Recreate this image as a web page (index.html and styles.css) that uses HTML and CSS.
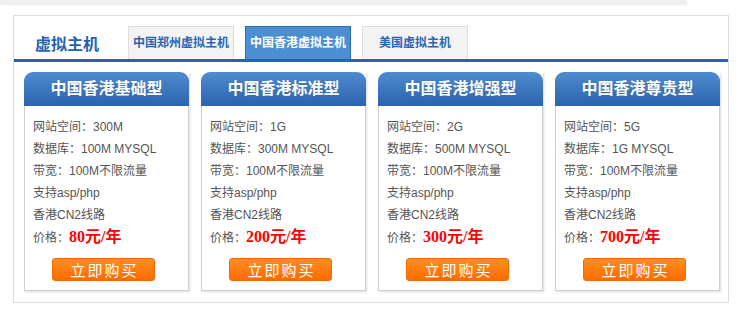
FILE: index.html
```html
<!DOCTYPE html>
<html lang="zh-CN">
<head>
  <meta charset="UTF-8" />
  <title>虚拟主机</title>
  <link rel="stylesheet" href="styles.css">
</head>
<body>
  <div class="topbar"></div>

  <div class="panel">
    <div class="panel-head">
      <h2 class="title">虚拟主机</h2>
      <ul class="tabs">
        <li class="tab">中国郑州虚拟主机</li>
        <li class="tab active">中国香港虚拟主机</li>
        <li class="tab">美国虚拟主机</li>
      </ul>
    </div>

    <div class="plans">
      <div class="plan">
        <div class="plan-name">中国香港基础型</div>
        <div class="plan-body">
          <p>网站空间：300M</p>
          <p>数据库：100M MYSQL</p>
          <p>带宽：100M不限流量</p>
          <p>支持asp/php</p>
          <p>香港CN2线路</p>
          <p>价格：<span class="price">80元/年</span></p>
          <a class="buy" href="#">立即购买</a>
        </div>
      </div>

      <div class="plan">
        <div class="plan-name">中国香港标准型</div>
        <div class="plan-body">
          <p>网站空间：1G</p>
          <p>数据库：300M MYSQL</p>
          <p>带宽：100M不限流量</p>
          <p>支持asp/php</p>
          <p>香港CN2线路</p>
          <p>价格：<span class="price">200元/年</span></p>
          <a class="buy" href="#">立即购买</a>
        </div>
      </div>

      <div class="plan">
        <div class="plan-name">中国香港增强型</div>
        <div class="plan-body">
          <p>网站空间：2G</p>
          <p>数据库：500M MYSQL</p>
          <p>带宽：100M不限流量</p>
          <p>支持asp/php</p>
          <p>香港CN2线路</p>
          <p>价格：<span class="price">300元/年</span></p>
          <a class="buy" href="#">立即购买</a>
        </div>
      </div>

      <div class="plan">
        <div class="plan-name">中国香港尊贵型</div>
        <div class="plan-body">
          <p>网站空间：5G</p>
          <p>数据库：1G MYSQL</p>
          <p>带宽：100M不限流量</p>
          <p>支持asp/php</p>
          <p>香港CN2线路</p>
          <p>价格：<span class="price">700元/年</span></p>
          <a class="buy" href="#">立即购买</a>
        </div>
      </div>
    </div>
  </div>
</body>
</html>
```

FILE: styles.css
```css
body {
  margin: 0;
  background: #fff;
  font-family: "Liberation Sans", "Noto Sans CJK SC", sans-serif;
  font-size: 12px;
  color: #555;
}

.topbar {
  width: 687px;
  height: 4px;
  background: #efefef;
  box-shadow: 0 1px 2px rgba(0,0,0,0.08);
}

.panel {
  width: 714px;
  margin: 11px 0 0 13px;
  border: 1px solid #ddd;
  padding-bottom: 11px;
}

.panel-head {
  display: flex;
  align-items: center;
  padding: 10px 0 0 21px;
  border-bottom: 3px solid #2565b0;
}

.title {
  width: 93px;
  margin: 0;
  font-size: 16px;
  font-weight: bold;
  color: #2462b0;
}

.tabs {
  display: flex;
  gap: 11px;
  margin: 0;
  padding: 0;
  list-style: none;
}

.tab {
  width: 104px;
  height: 32px;
  line-height: 32px;
  text-align: center;
  background: #f3f3f3;
  border: 1px solid #ddd;
  border-bottom: none;
  font-weight: bold;
  color: #2a66b4;
}

.tab.active {
  background: #4b8fd2;
  border-color: #2c6db4;
  color: #fff;
}

.plans {
  display: flex;
  gap: 12px;
  padding: 10px 0 0 10px;
}

.plan {
  width: 165px;
  box-shadow: 1px 1px 2px rgba(0,0,0,0.15);
}

.plan-name {
  height: 34px;
  line-height: 34px;
  text-align: center;
  border-radius: 9px 9px 0 0;
  background: linear-gradient(#4f8ccf, #2b63ae);
  color: #fff;
  font-size: 16px;
  font-weight: bold;
  text-shadow: 0 0 1px rgba(0,0,0,0.3);
}

.plan-body {
  padding: 10px 0 9px 8px;
  border: 1px solid #cfcfcf;
  border-top: none;
  background: #fff;
}

.plan-body p {
  margin: 0;
  height: 22px;
  line-height: 22px;
}

.price {
  font-family: "Liberation Serif", "Noto Sans CJK SC", serif;
  font-size: 16px;
  font-weight: bold;
  color: #f00;
}

.buy {
  display: block;
  width: 101px;
  height: 21px;
  line-height: 21px;
  margin: 10px 0 0 19px;
  border: 1px solid #f26a00;
  border-radius: 3px;
  background: linear-gradient(#ff8f20, #ff6a00);
  color: #fff;
  font-family: "Noto Sans CJK SC", sans-serif;
  font-size: 15px;
  letter-spacing: 2px;
  text-indent: 2px;
  text-align: center;
  text-decoration: none;
}
```
